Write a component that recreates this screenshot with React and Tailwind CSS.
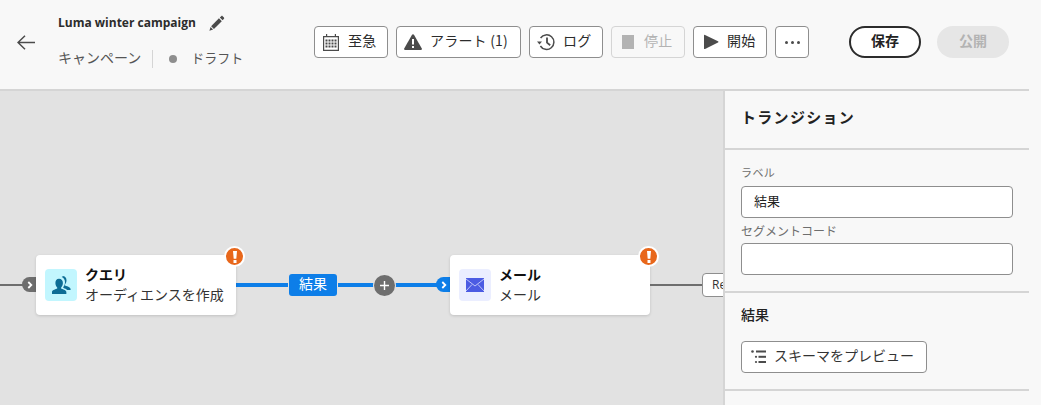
const jp = "font-['Noto_Sans_CJK_JP','Noto_Sans',sans-serif]";

const BackArrow = () => (
  <svg width="18" height="15" viewBox="0 0 18 15" fill="none" stroke="#4b4b4b" strokeWidth="1.500">
    <path d="M1 7.500h17M8 .7L1 7.500l7 6.800" />
  </svg>
);

const CalendarIcon = () => (
  <svg width="18" height="18" viewBox="0 0 18 18" fill="#4b4b4b">
    <path d="M1 3h3V1h1.200v2h7.600V1H14v2h3v15H1V3zm1.200 1.200v12.600h13.600V4.200H2.200z" />
    <path d="M3.500 6.500h2v2h-2zM6.500 6.500h2v2h-2zM9.500 6.500h2v2h-2zM12.500 6.500h2v2h-2zM3.500 9.500h2v2h-2zM6.500 9.500h2v2h-2zM9.500 9.500h2v2h-2zM12.500 9.500h2v2h-2zM3.500 12.500h2v2h-2zM6.500 12.500h2v2h-2zM9.500 12.500h2v2h-2zM12.500 12.500h2v2h-2z" />
  </svg>
);

const AlertIcon = () => (
  <svg width="18" height="16" viewBox="0 0 18 16">
    <path d="M9 .3c.5 0 .8.2 1.100.7l7.700 13.400c.4.700 0 1.500-.9 1.500H1.100c-.9 0-1.300-.8-.9-1.500L7.900 1c.3-.5.6-.7 1.100-.7z" fill="#4b4b4b" />
    <path d="M8 5h2v5.600H8zM8 12h2v2H8z" fill="#fff" />
  </svg>
);

const HistoryIcon = () => (
  <svg width="18" height="18" viewBox="0 0 18 18" fill="none" stroke="#4b4b4b">
    <path d="M3.600 5A7.300 7.300 0 1 1 3.400 13" strokeWidth="1.500" />
    <path d="M10 4.400v5.200l3.200 2.600" strokeWidth="1.800" />
    <path d="M0 8.400h5L2.500 11.400z" fill="#4b4b4b" stroke="none" />
  </svg>
);

const PlayIcon = () => (
  <svg width="16" height="16" viewBox="0 0 16 16" fill="#4b4b4b">
    <path d="M1 1.500c0-.6.500-.9 1-.6l13 6.400c.6.300.6 1 0 1.300L2 15c-.5.300-1 0-1-.6z" />
  </svg>
);

const PencilIcon = () => (
  <svg width="17" height="17" viewBox="0 0 18 18" fill="#4b4b4b">
    <path d="M14 1.200c.5-.4 1.100-.4 1.500 0l1.400 1.400c.4.400.4 1 0 1.500L15.500 5.500 12.500 2.600z" />
    <path d="M11.600 3.500l3 3L6.300 14.800l-3-3z" />
    <path d="M2.700 12.700l2.700 2.700-3.900 1.200z" />
  </svg>
);

const AudienceIcon = () => (
  <svg width="19" height="18" viewBox="0 0 19 18" fill="#0d6d95">
    <path d="M10.500 0c2.500 0 4 1.900 4 4.300 0 1.700-.6 3.100-1.500 4.100-.3.400-.3.900.1 1.200.9.600 4.900 1.300 5.400 3.200.1.400.1 1.200.1 1.200h-3.300c-.8-.9-2.600-1.500-3.700-2-.4-.2-.6-.6-.3-1 1.100-1.200 1.700-2.900 1.700-4.700 0-2.500-1.300-4.600-3.300-5.200.5-.7 1.300-1.100 2.800-1.100z" />
    <path d="M7 2.800c2.500 0 3.900 1.900 3.900 4.300 0 1.800-.7 3.300-1.700 4.300-.3.300-.3.900 0 1.200.9.700 4.700 1.400 5.100 3.200.1.500.1 2.200.1 2.200H-.1s0-1.700.1-2.200c.4-1.800 4.200-2.500 5.100-3.200.3-.3.300-.9 0-1.200-1-1-1.700-2.500-1.700-4.300 0-2.400 1.100-4.300 3.600-4.300z" />
  </svg>
);

const MailIcon = () => (
  <svg width="18" height="14" viewBox="0 0 18 14">
    <rect width="18" height="14" fill="#4c5ce3" />
    <path d="M0 1l9 7 9-7M0 13l6-6.500M18 13l-6-6.500" fill="none" stroke="#c9cffa" strokeWidth="0.900" />
  </svg>
);

const SchemaIcon = () => (
  <svg width="16" height="14" viewBox="0 0 16 14" fill="#4b4b4b">
    <circle cx="1.500" cy="1.500" r="1.300" />
    <circle cx="5" cy="6.800" r="1.100" />
    <circle cx="5" cy="12" r="1.100" />
    <rect x="5" y="0.500" width="10" height="2" />
    <rect x="7.500" y="5.800" width="7.500" height="2" />
    <rect x="7.500" y="11" width="7.500" height="2" />
  </svg>
);

const ToolButton = ({ icon, label, className, disabled }) => (
  <button
    className={`flex items-center gap-2 h-8 rounded-[4px] border text-[14px] ${
      disabled ? 'border-[#d5d5d5] text-[#b3b3b3]' : 'border-[#8e8e8e] bg-white text-[#2c2c2c]'
    } ${className}`}
  >
    {icon}
    {label && <span className="mb-[3px] tracking-[0.2px]">{label}</span>}
  </button>
);

const Warning = () => (
  <span className="absolute -right-[9px] -top-[9px] w-[17px] h-[17px] box-content rounded-full bg-[#e8671b] border-2 border-white flex items-center justify-center">
    <svg width="4" height="12" viewBox="0 0 4 12" fill="#fff">
      <path d="M0 0h4L3.300 7.800H.7zM.5 9h3v3h-3z" />
    </svg>
  </span>
);

const Node = ({ left, icon, iconBg, title, subtitle }) => (
  <div
    className={`absolute top-[164px] h-[60px] w-[200px] rounded-[4px] bg-white shadow-[0_1px_3px_rgba(0,0,0,0.15)] flex items-center gap-2 pl-[9px] ${left}`}
  >
    <div className={`w-8 h-8 rounded-[4px] flex items-center justify-center shrink-0 ${iconBg}`}>{icon}</div>
    <div className="flex flex-col mb-[3px]">
      <span className="text-[14px] leading-[20px] font-bold text-[#111]">{title}</span>
      <span className="text-[14px] leading-[20px] text-[#333]">{subtitle}</span>
    </div>
    <Warning />
  </div>
);

const Chevron = () => (
  <svg width="6" height="8" viewBox="0 0 6 8" fill="none" stroke="#fff" strokeWidth="1.800">
    <path d="M1.300 1l3 3-3 3" />
  </svg>
);

export default function App() {
  return (
    <div className={`w-[1041px] h-[405px] overflow-hidden bg-[#f8f8f8] ${jp}`}>
      <div className="w-[1029px] h-[91px] border-b-2 border-[#d5d5d5] flex items-start">
        <div className="w-[58px] pt-[35px] pl-[17px]">
          <BackArrow />
        </div>
        <div className="w-[256px] pt-[13px]">
          <div className="flex items-center h-5">
            <span className="text-[12px] font-bold text-[#2c2c2c] font-['Open_Sans',sans-serif]">Luma winter campaign</span>
            <span className="ml-[12px]"><PencilIcon /></span>
          </div>
          <div className="flex items-center mt-[17px] h-[18px] text-[14px] text-[#555]">
            <span className="mb-[3px]">キャンペーン</span>
            <span className="w-px h-[18px] bg-[#d5d5d5] ml-[11px] mr-[16px]"></span>
            <span className="w-2 h-2 rounded-full bg-[#8e8e8e] mr-[14px]"></span>
            <span className="mb-[3px] text-[13px]">ドラフト</span>
          </div>
        </div>
        <div className="flex gap-2 pt-[26px]">
          <ToolButton icon={<CalendarIcon />} label="至急" className="w-[74px] pl-[7px]" />
          <ToolButton icon={<AlertIcon />} label="アラート (1)" className="w-[125px] pl-[7px]" />
          <ToolButton icon={<HistoryIcon />} label="ログ" className="w-[74px] pl-[7px]" />
          <ToolButton
            icon={<span className="block w-3 h-[14px] bg-[#b3b3b3]"></span>}
            label="停止"
            className="w-[74px] pl-[10px] gap-[10px]"
            disabled
          />
          <ToolButton icon={<PlayIcon />} label="開始" className="w-[74px] pl-[9px]" />
          <ToolButton
            icon={
              <span className="flex gap-[3px]">
                <i className="w-[3px] h-[3px] rounded-full bg-[#4b4b4b]"></i>
                <i className="w-[3px] h-[3px] rounded-full bg-[#4b4b4b]"></i>
                <i className="w-[3px] h-[3px] rounded-full bg-[#4b4b4b]"></i>
              </span>
            }
            className="w-[34px] justify-center"
          />
        </div>
        <div className="flex gap-4 pt-[26px] ml-[40px]">
          <button className="w-[72px] h-8 pb-[4px] rounded-full border-2 border-[#2c2c2c] bg-white text-[14px] font-bold text-[#222]">保存</button>
          <button className="w-[72px] h-8 pb-[4px] rounded-full bg-[#e6e6e6] text-[14px] font-bold text-[#b3b3b3]">公開</button>
        </div>
      </div>

      <div className="flex h-[314px]">
        <div className="relative w-[723px] bg-[#e2e2e2] overflow-hidden shrink-0">
          <div className="absolute left-0 top-[193px] w-[24px] h-[2px] bg-[#6e6e6e]"></div>
          <div className="absolute left-[22px] top-[186px] w-[18px] h-[15px] rounded-l-full bg-[#6e6e6e] flex items-center pl-[5px]"><Chevron /></div>
          <div className="absolute left-[236px] top-[192px] w-[204px] h-[4px] bg-[#0d7ee8]"></div>
          <div className="absolute left-[289px] top-[183px] w-[48px] h-[22px] rounded-[3px] bg-[#0d7ee8] ring-1 ring-[#e2e2e2] text-white text-[14px] leading-[19px] text-center">結果</div>
          <div className="absolute left-[374px] top-[184px] w-[21px] h-[21px] rounded-full bg-[#6e6e6e] ring-1 ring-[#e2e2e2] flex items-center justify-center">
            <svg width="9" height="9" viewBox="0 0 9 9" fill="#fff"><path d="M3.800 0h1.400v3.800H9v1.400H5.200V9H3.800V5.200H0V3.800h3.800z" /></svg>
          </div>
          <div className="absolute left-[436px] top-[186px] w-[16px] h-[15px] rounded-l-full bg-[#0d7ee8] flex items-center pl-[5px]"><Chevron /></div>
          <Node
            left="left-[36px]"
            icon={<AudienceIcon />}
            iconBg="bg-[#c2f6fe]"
            title="クエリ"
            subtitle="オーディエンスを作成"
          />
          <Node
            left="left-[450px]"
            icon={<MailIcon />}
            iconBg="bg-[#ebeeff]"
            title="メール"
            subtitle="メール"
          />
          <div className="absolute left-[650px] top-[193px] w-[53px] h-[2px] bg-[#6e6e6e]"></div>
          <div className="absolute left-[702px] top-[182px] w-[40px] h-[24px] rounded-[4px] border border-[#8e8e8e] bg-white text-[12px] leading-[22px] pl-[9px] text-[#333] font-['Open_Sans',sans-serif]">Re</div>
        </div>
        <div className="w-[306px] border-l-2 border-[#d5d5d5] bg-[#f8f8f8] relative z-10 shrink-0">
          <div className="h-[59px] border-b-2 border-[#d5d5d5] pl-[16px] pb-[5px] flex items-center">
            <span className="text-[15px] font-bold tracking-[1.300px] text-[#222]">トランジション</span>
          </div>
          <div className="h-[143px] border-b-2 border-[#d5d5d5] pl-[16px] pt-[14px]">
            <label className="block text-[11px] leading-[16px] tracking-[0.4px] text-[#6e6e6e]">ラベル</label>
            <input
              readOnly
              value="結果"
              className="block mt-[6px] w-[272px] h-8 rounded-[4px] border border-[#8e8e8e] bg-white pl-[12px] pb-[3px] text-[13px] text-[#222] outline-none"
            />
            <label className="block mt-[5px] text-[12px] leading-[16px] text-[#6e6e6e]">セグメントコード</label>
            <input
              readOnly
              className="block mt-[4px] w-[272px] h-8 rounded-[4px] border border-[#8e8e8e] bg-white outline-none"
            />
          </div>
          <div className="h-[98px] border-b-2 border-[#d5d5d5] pl-[16px] pt-[11px]">
            <div className="text-[14px] leading-[20px] font-medium text-[#222]">結果</div>
            <button className="mt-[17px] w-[186px] h-8 rounded-[4px] border border-[#8e8e8e] bg-white flex items-center gap-[7px] pl-[9px] text-[14px] text-[#333]">
              <SchemaIcon />
              <span className="mb-[3px]">スキーマをプレビュー</span>
            </button>
          </div>
        </div>
      </div>
    </div>
  );
}
